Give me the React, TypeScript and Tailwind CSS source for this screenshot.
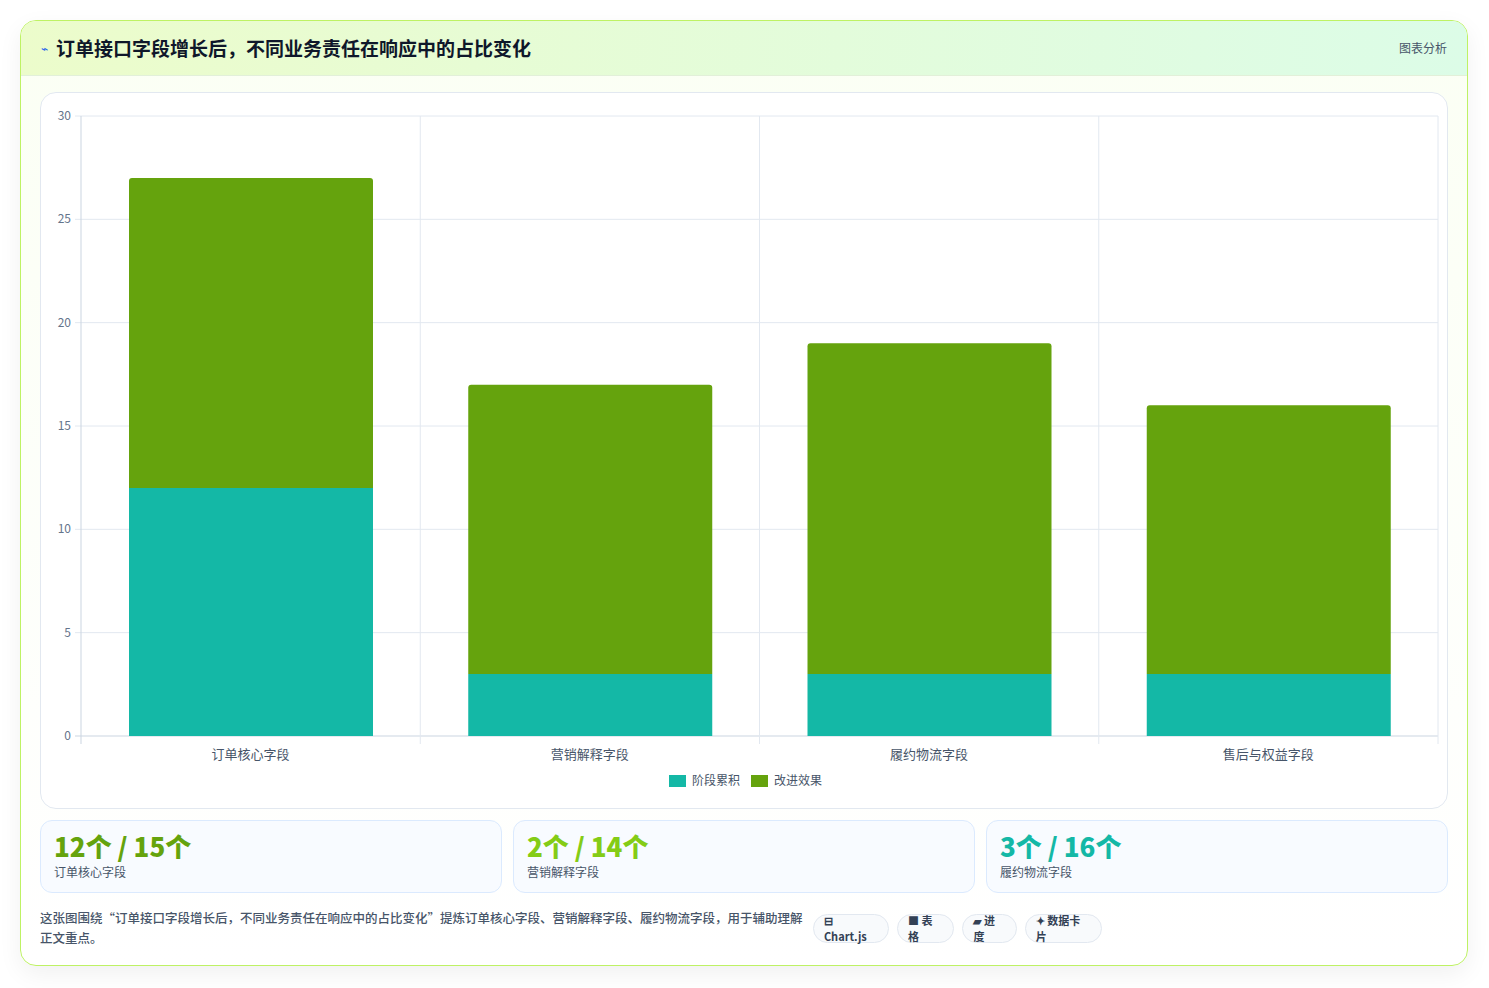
import React from "react";

const cats = [
  { name: "订单核心字段", a: 12, b: 15 },
  { name: "营销解释字段", a: 3, b: 14 },
  { name: "履约物流字段", a: 3, b: 16 },
  { name: "售后与权益字段", a: 3, b: 13 },
];

function Chart() {
  const W = 1409, H = 715;
  const x0 = 40, x1 = 1397, y0 = 23, y1 = 643;
  const sy = (y1 - y0) / 30;
  const cw = (x1 - x0) / 4;
  return (
    <svg width={W} height={H} style={{ fontFamily: '"Noto Sans CJK SC", "Liberation Sans", sans-serif' }}>
      {[0, 5, 10, 15, 20, 25, 30].map((v) => {
        const y = y1 - v * sy;
        return (
          <g key={v}>
            <line x1={x0 - 6} x2={x1} y1={y} y2={y} stroke={v === 0 ? "#cbd5e1" : "#e2e8f0"} />
            <text x={x0 - 10} y={y + 4} textAnchor="end" fontSize="12" fill="#64748b">{v}</text>
          </g>
        );
      })}
      {[0, 1, 2, 3, 4].map((i) => (
        <line key={i} x1={x0 + i * cw} x2={x0 + i * cw} y1={y0} y2={y1 + 8} stroke={i === 0 ? "#cbd5e1" : "#e2e8f0"} />
      ))}
      {cats.map((c, i) => {
        const bx = x0 + i * cw + 48;
        const bw = 244;
        const ha = c.a * sy, hb = c.b * sy;
        return (
          <g key={c.name}>
            <rect x={bx} y={y1 - ha} width={bw} height={ha} fill="#14b8a6" />
            <path d={`M${bx} ${y1 - ha} V${y1 - ha - hb + 3} Q${bx} ${y1 - ha - hb} ${bx + 3} ${y1 - ha - hb} H${bx + bw - 3} Q${bx + bw} ${y1 - ha - hb} ${bx + bw} ${y1 - ha - hb + 3} V${y1 - ha} Z`} fill="#65a30d" />
            <text x={x0 + i * cw + cw / 2} y={y1 + 23} textAnchor="middle" fontSize="13" fill="#475569">{c.name}</text>
          </g>
        );
      })}
      <rect x={628} y={682} width={17} height={12} fill="#14b8a6" />
      <text x={651} y={692} fontSize="12" fill="#475569">阶段累积</text>
      <rect x={710} y={682} width={17} height={12} fill="#65a30d" />
      <text x={733} y={692} fontSize="12" fill="#475569">改进效果</text>
    </svg>
  );
}

const stats = [
  { v: "12个 / 15个", l: "订单核心字段", c: "text-[#65a30d]" },
  { v: "2个 / 14个", l: "营销解释字段", c: "text-[#84cc16]" },
  { v: "3个 / 16个", l: "履约物流字段", c: "text-[#14b8a6]" },
];

export default function App() {
  return (
    <div className="w-[1489px] h-[988px] bg-white pt-5 pl-5" style={{ fontFamily: '"Noto Sans CJK SC", "Liberation Sans", sans-serif' }}>
      <div className="w-[1448px] h-[946px] rounded-2xl border border-[#bef264] bg-gradient-to-b from-[#fbfff4] to-white shadow-[0_8px_24px_rgba(0,0,0,0.06)] overflow-hidden flex flex-col">
        <div className="h-[55px] flex items-center justify-between px-5 bg-gradient-to-r from-[#ecfccb] to-[#dcfce7] border-b border-[#e2f0d9]">
          <div className="flex items-center gap-2">
            <span className="text-[#2563eb] text-xs">⌁</span>
            <span className="text-[19px] font-bold text-[#0f172a]">订单接口字段增长后，不同业务责任在响应中的占比变化</span>
          </div>
          <span className="text-xs text-[#475569]">图表分析</span>
        </div>
        <div className="px-[19px] pt-4 flex flex-col">
          <div className="h-[717px] rounded-2xl border border-[#e2e8f0] bg-white">
            <Chart />
          </div>
          <div className="grid grid-cols-3 gap-[11px] mt-[11px]">
            {stats.map((s) => (
              <div key={s.l} className="h-[73px] rounded-xl border border-[#dbeafe] bg-[#f8fbff] px-[13px] pt-[8px]">
                <div className={`text-[26px] font-extrabold leading-[34px] ${s.c}`}>{s.v}</div>
                <div className="text-xs text-[#475569] mt-[1px]">{s.l}</div>
              </div>
            ))}
          </div>
          <div className="flex items-center justify-between mt-[15px]">
            <p className="w-[775px] text-[12.5px] leading-5 text-[#475569] font-medium">这张图围绕“订单接口字段增长后，不同业务责任在响应中的占比变化”提炼订单核心字段、营销解释字段、履约物流字段，用于辅助理解正文重点。</p>
            <div className="flex gap-2 mr-[346px]">
              {["⊟ Chart.js", "■ 表格", "▰ 进度", "✦ 数据卡片"].map((t) => (
                <span key={t} className="h-[29px] px-[10px] flex items-center rounded-full border border-[#e2e8f0] bg-[#f8fafc] text-[11px] font-bold text-[#334155]">{t}</span>
              ))}
            </div>
          </div>
        </div>
      </div>
    </div>
  );
}
